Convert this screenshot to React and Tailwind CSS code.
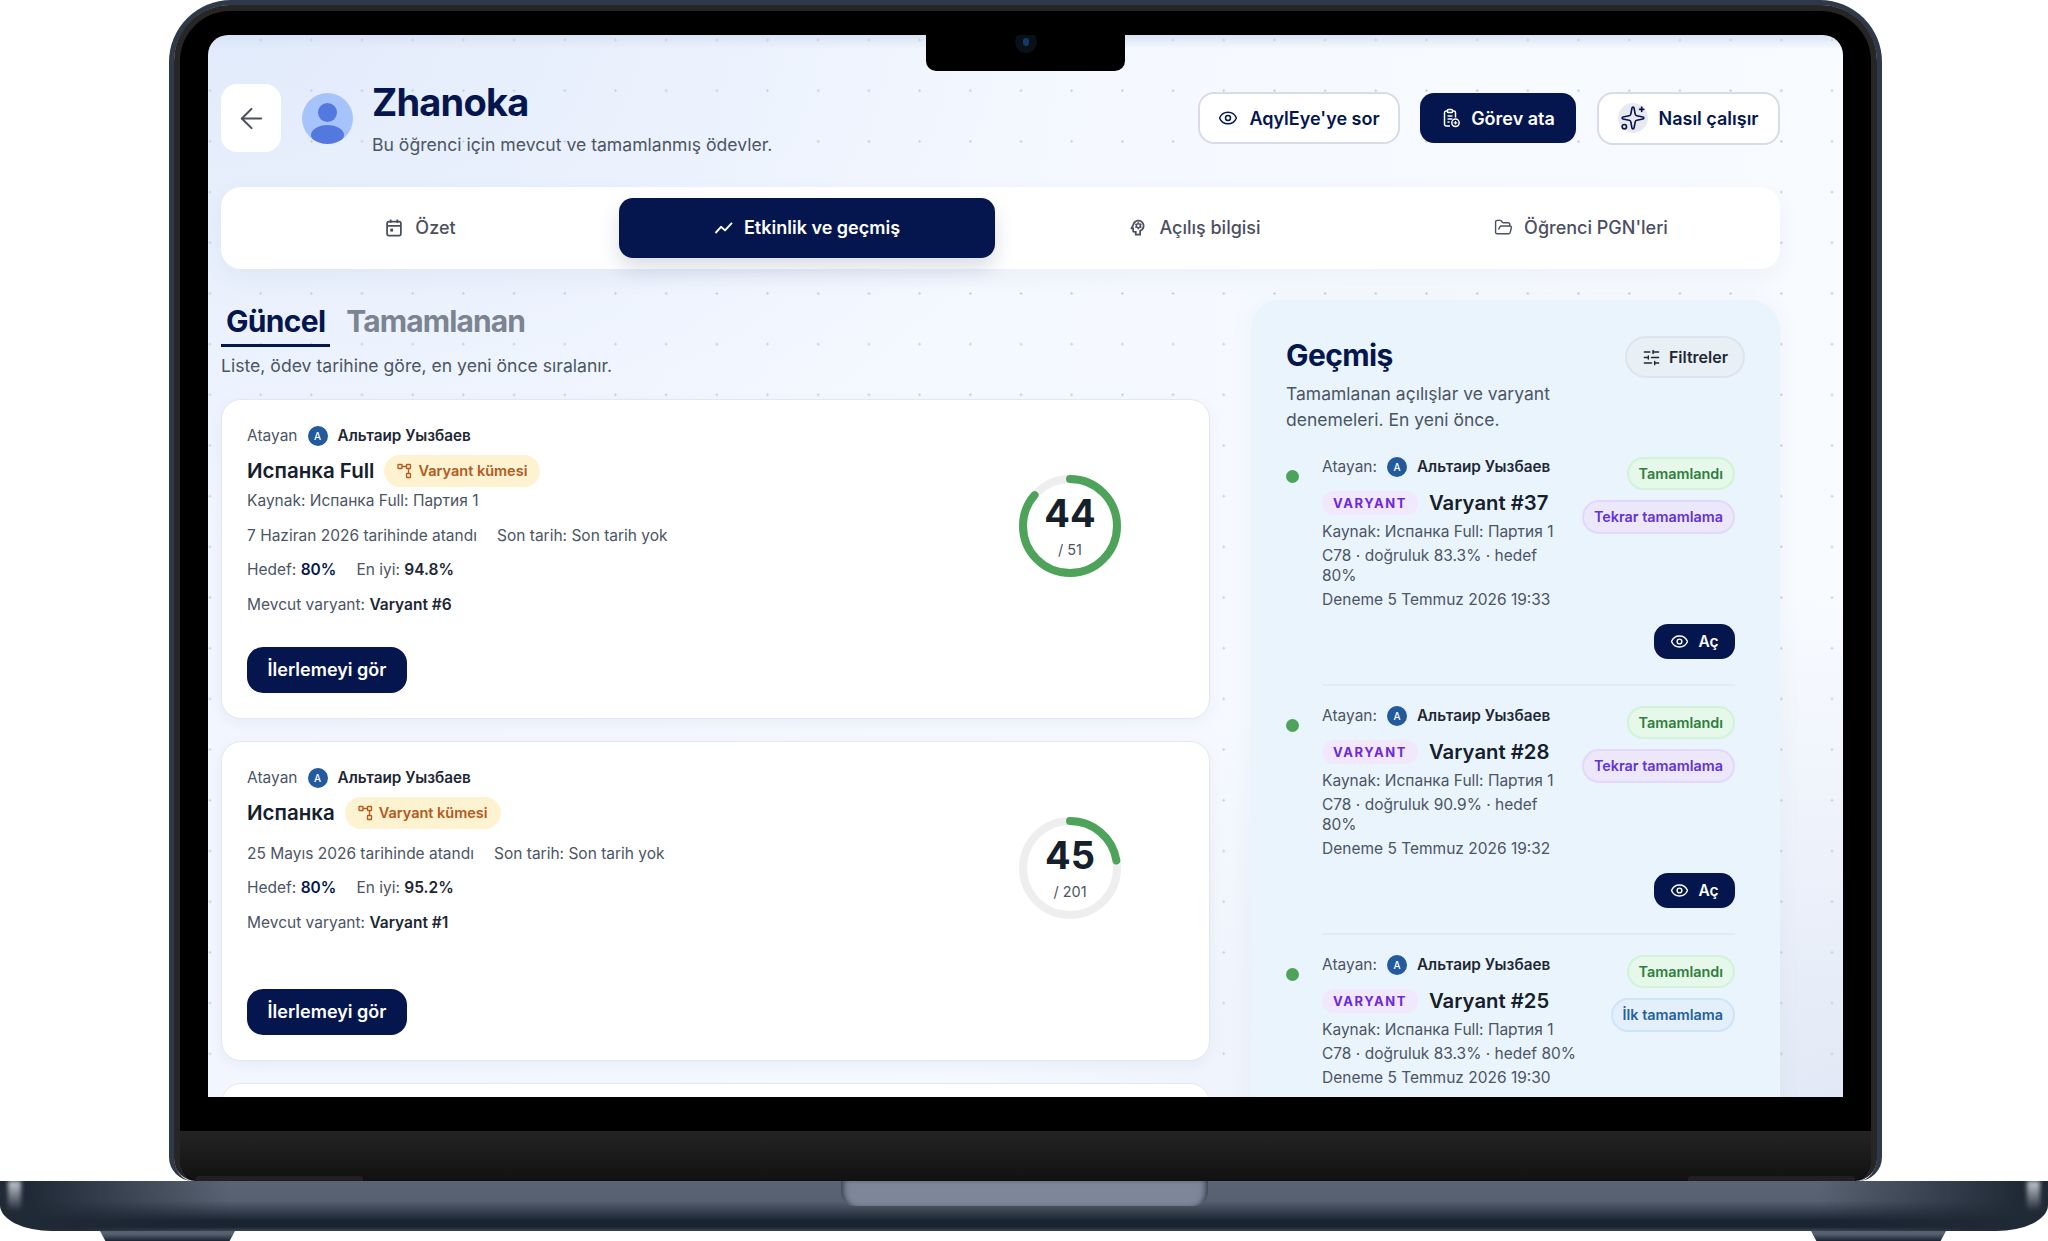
import React from "react";
import { ArrowLeft, Eye, FolderOpen, SlidersHorizontal, Sparkles } from "lucide-react";
import { MdOutlinePsychology } from "react-icons/md";

const tabs = [
  { label: "Özet", icon: <CalendarDot /> },
  { label: "Etkinlik ve geçmiş", icon: <ChartLine />, active: true },
  { label: "Açılış bilgisi", icon: <MdOutlinePsychology size={21} /> },
  { label: "Öğrenci PGN'leri", icon: <FolderOpen size={19} strokeWidth={1.8} /> },
];

const assignments = [
  {
    title: "Испанка Full",
    source: "Kaynak: Испанка Full: Партия 1",
    assigned: "7 Haziran 2026 tarihinde atandı",
    best: "94.8%",
    variant: "Varyant #6",
    done: 44,
    total: 51,
  },
  {
    title: "Испанка",
    assigned: "25 Mayıs 2026 tarihinde atandı",
    best: "95.2%",
    variant: "Varyant #1",
    done: 45,
    total: 201,
  },
];

const history = [
  { name: "Varyant #37", acc: "83.3%", time: "19:33", first: false },
  { name: "Varyant #28", acc: "90.9%", time: "19:32", first: false },
  { name: "Varyant #25", acc: "83.3%", time: "19:30", first: true },
];

function CalendarDot() {
  return (
    <svg width="20" height="20" viewBox="0 0 18 18" fill="none" stroke="currentColor" strokeWidth="1.6">
      <rect x="2.8" y="3.2" width="12.4" height="12.6" rx="1.6" />
      <path d="M2.8 7h12.4M6 1.4v3M12 1.4v3" />
      <rect x="5.6" y="9.6" width="2.6" height="2.6" fill="currentColor" stroke="none" />
    </svg>
  );
}

function ChartLine() {
  return (
    <svg width="20" height="20" viewBox="0 0 20 20" fill="none" stroke="currentColor" strokeWidth="1.9" strokeLinejoin="round">
      <path d="M1.5 15l5.5-6.2 4 3.6 7-7.6" />
    </svg>
  );
}

function ClipboardAdd() {
  return (
    <svg width="20" height="20" viewBox="0 0 20 20" fill="none" stroke="currentColor" strokeWidth="1.5">
      <path d="M9 18H5.2A1.7 1.7 0 0 1 3.5 16.3V4.7A1.7 1.7 0 0 1 5.2 3h7.6a1.7 1.7 0 0 1 1.7 1.7V9.5" />
      <rect x="6.5" y="1.5" width="5" height="3" rx="0.8" fill="#04164d" />
      <path d="M6.5 8h5M6.5 11h5M6.5 14h2" />
      <circle cx="14.5" cy="14.8" r="3.7" />
      <path d="M14.5 13v3.6M12.7 14.8h3.6" strokeWidth="1.2" />
    </svg>
  );
}

function VariantSet() {
  return (
    <svg width="15" height="16" viewBox="0 0 15 16" fill="none" stroke="currentColor" strokeWidth="1.3">
      <rect x="1" y="1.5" width="4" height="4" rx="0.6" />
      <rect x="9.5" y="1.5" width="4" height="4" rx="0.6" />
      <rect x="9.5" y="10.5" width="4" height="4" rx="0.6" />
      <path d="M5 3.5h4.5M11.5 5.5v5" />
    </svg>
  );
}

function UserAvatar() {
  return (
    <div className="relative h-[51px] w-[51px] shrink-0 overflow-hidden rounded-full bg-[#a6c3fb]">
      <div className="absolute left-[16px] top-[10px] h-[19px] w-[19px] rounded-full bg-[#5479de]" />
      <div className="absolute left-[9px] top-[32px] h-[20px] w-[33px] rounded-[50%] bg-[#5479de]" />
    </div>
  );
}

function Initial() {
  return (
    <span className="flex h-[20px] w-[20px] shrink-0 items-center justify-center rounded-full bg-[#23599d] text-[10px] font-medium text-white">
      A
    </span>
  );
}

function ProgressRing({ done, total }) {
  const r = 47;
  const c = 2 * Math.PI * r;
  return (
    <div className="relative mr-[88px] mt-[75px] h-[102px] w-[102px] shrink-0 self-start">
      <svg width="102" height="102" viewBox="0 0 102 102" className="-rotate-90">
        <circle cx="51" cy="51" r={r} fill="none" stroke="#eeeeee" strokeWidth="8" />
        <circle
          cx="51"
          cy="51"
          r={r}
          fill="none"
          stroke="#4ea35a"
          strokeWidth="8"
          strokeLinecap="round"
          strokeDasharray={`${(c * done) / total} ${c}`}
        />
      </svg>
      <div className="absolute inset-0 flex flex-col items-center pt-[16px]">
        <span className="text-[38px] font-bold leading-[44px] text-[#15202b]">{done}</span>
        <span className="mt-[5px] text-[14.5px] leading-[20px] text-[#4b5563]">/ {total}</span>
      </div>
    </div>
  );
}

function AssignmentCard({ item }) {
  return (
    <div className="flex h-[320px] justify-between rounded-[20px] border border-[#e4e7ee] bg-white shadow-[0_4px_14px_rgba(30,50,90,0.05)]">
      <div className="flex flex-col p-[25px] pr-0 text-[15.5px] leading-[22px] text-[#4b5563]">
        <div className="flex items-center gap-[10px]">
          <span>Atayan</span>
          <Initial />
          <span className="text-[15.3px] font-semibold text-[#1d2733]">Альтаир Уызбаев</span>
        </div>
        <div className="mt-[8px] flex h-[32px] items-center gap-[10px]">
          <span className="text-[20.5px] font-semibold text-[#15202b]">{item.title}</span>
          <span className="flex h-[32px] items-center gap-[6px] rounded-full bg-[#fdf3d1] px-[13px] text-[14.5px] font-semibold text-[#b4591f]">
            <VariantSet />
            Varyant kümesi
          </span>
        </div>
        {item.source && <div className="mt-[3px]">{item.source}</div>}
        <div className={`flex gap-[20px] ${item.source ? "mt-[13px]" : "mt-[14px]"}`}>
          <span>{item.assigned}</span>
          <span>Son tarih: Son tarih yok</span>
        </div>
        <div className="mt-[12px] flex gap-[20px]">
          <span>
            Hedef: <b className="font-semibold text-[#04164d]">80%</b>
          </span>
          <span>
            En iyi: <b className="font-semibold text-[#1d2733]">{item.best}</b>
          </span>
        </div>
        <div className="mt-[13px]">
          Mevcut varyant: <b className="font-semibold text-[#1d2733]">{item.variant}</b>
        </div>
        <button className="mt-auto h-[46px] w-[160px] rounded-[16px] bg-[#04164d] text-[18px] font-semibold text-white">
          İlerlemeyi gör
        </button>
      </div>
      <ProgressRing done={item.done} total={item.total} />
    </div>
  );
}

function HistoryItem({ item, last }) {
  return (
    <div className="flex">
      <div className="w-[36px] shrink-0 pt-[13px]">
        <div className="h-[13px] w-[13px] rounded-full bg-[#4ea35a]" />
      </div>
      <div className={`flex-1 ${last ? "" : "border-b-2 border-[#e2ebf5] pb-[25px]"}`}>
        <div className="flex justify-between gap-[12px]">
          <div className="min-w-0 flex-1 text-[15.5px] leading-[20px] text-[#4b5563]">
            <div className="flex items-center gap-[10px]">
              <span>Atayan:</span>
              <Initial />
              <span className="text-[15.3px] font-semibold text-[#1d2733]">Альтаир Уызбаев</span>
            </div>
            <div className="mt-[13px] flex items-center gap-[11px]">
              <span className="flex h-[24px] w-[96px] items-center justify-center rounded-full bg-[#f1e8fd] text-[13px] font-bold tracking-[1.5px] text-[#6d28d9]">
                VARYANT
              </span>
              <span className="text-[20.3px] font-semibold leading-[26px] text-[#15202b]">{item.name}</span>
            </div>
            <div className="mt-[6px]">Kaynak: Испанка Full: Партия 1</div>
            <div className="mt-[4px]">C78 · doğruluk {item.acc} · hedef 80%</div>
            <div className="mt-[4px]">Deneme 5 Temmuz 2026 {item.time}</div>
          </div>
          <div className="flex shrink-0 flex-col items-end gap-[10px]">
            <span className="flex h-[33px] items-center rounded-full border-2 border-[#d2f3d8] bg-[#e5f8e9] px-[10px] text-[14.4px] font-semibold text-[#2f7d3e]">
              Tamamlandı
            </span>
            {item.first ? (
              <span className="flex h-[34px] items-center rounded-full border-2 border-[#cde5fb] bg-[#e3f0fc] px-[10px] text-[14.4px] font-semibold text-[#24609f]">
                İlk tamamlama
              </span>
            ) : (
              <span className="flex h-[34px] items-center rounded-full border-2 border-[#e3d8fb] bg-[#ede7fc] px-[10px] text-[14.4px] font-semibold text-[#6232d6]">
                Tekrar tamamlama
              </span>
            )}
          </div>
        </div>
        {!last && (
          <div className="mt-[14px] flex justify-end">
            <button className="flex h-[35px] w-[81px] items-center justify-center gap-[9px] rounded-[14px] bg-[#04164d] text-[15.5px] font-semibold text-white">
              <Eye size={19} strokeWidth={1.8} />
              Aç
            </button>
          </div>
        )}
      </div>
    </div>
  );
}

function Screen() {
  return (
    <div className="relative h-[1062px] overflow-hidden rounded-t-[20px] bg-[#f3f8ff] bg-[radial-gradient(circle,#c9d2e2_1px,transparent_1.4px),linear-gradient(180deg,#d9e3f3_0px,transparent_14px),radial-gradient(ellipse_900px_500px_at_0%_0%,#e2ebfb,transparent),radial-gradient(ellipse_900px_500px_at_100%_100%,#e2e9f6,transparent),linear-gradient(90deg,#f1f6ff,#f8fbff)] bg-[size:50.7px_50.7px,100%_100%,100%_100%,100%_100%,100%_100%] bg-[position:-23.35px_-20.35px,0_0,0_0,0_0,0_0] pl-[13px] pr-[63px] pt-[49px] [font-family:Inter,sans-serif]">
      {/* header */}
      <div className="flex h-[68px] items-center">
        <button className="flex h-[68px] w-[60px] shrink-0 items-center justify-center rounded-[16px] bg-white text-[#4b5060]">
          <ArrowLeft size={33} strokeWidth={1.5} />
        </button>
        <div className="ml-[21px]">
          <UserAvatar />
        </div>
        <div className="ml-[19px] flex-1">
          <h1 className="mt-[1px] text-[38px] font-bold leading-[46px] tracking-[-0.8px] text-[#04164d]">Zhanoka</h1>
          <p className="mt-[7px] text-[17.6px] leading-[26px] text-[#4b5563]">Bu öğrenci için mevcut ve tamamlanmış ödevler.</p>
        </div>
        <div className="flex items-center gap-[20px] text-[18px] font-semibold text-[#04164d]">
          <button className="flex h-[52px] w-[202px] items-center justify-center gap-[11px] rounded-[16px] border-2 border-[#d8dbe8] bg-white">
            <Eye size={20} strokeWidth={1.8} />
            AqylEye'ye sor
          </button>
          <button className="flex h-[50px] w-[156px] items-center justify-center gap-[10px] rounded-[14px] bg-[#04164d] text-white">
            <ClipboardAdd />
            Görev ata
          </button>
          <button className="ml-[1px] flex h-[53px] w-[183px] items-center justify-center gap-[10px] rounded-[16px] border-2 border-[#d8dbe8] bg-white">
            <span className="flex h-[30px] w-[30px] items-center justify-center rounded-full bg-[#e9eaf1]">
              <Sparkles size={26} strokeWidth={1.5} />
            </span>
            Nasıl çalışır
          </button>
        </div>
      </div>

      {/* tabs */}
      <div className="mt-[35px] grid h-[82px] grid-cols-4 gap-[11px] rounded-[20px] bg-white p-[11px] shadow-[0_8px_24px_rgba(40,60,110,0.05)]">
        {tabs.map((tab) => (
          <div
            key={tab.label}
            className={
              tab.active
                ? "flex items-center justify-center gap-[10px] rounded-[14px] bg-[#04164d] pb-[1px] text-[18px] font-semibold text-white shadow-[0_10px_20px_rgba(30,50,90,0.16)]"
                : "flex items-center justify-center gap-[11px] pb-[1px] text-[18px] font-medium text-[#4b5060]"
            }
          >
            {tab.icon}
            {tab.label}
          </div>
        ))}
      </div>

      {/* columns */}
      <div className="mt-[31px] flex items-start gap-[41px]">
        <div className="w-[989px] shrink-0">
          <div className="flex h-[47px] items-end gap-[16px]">
            <span className="border-b-[3px] border-[#04164d] px-[5px] pb-[1px] text-[30px] font-bold leading-[43px] tracking-[-0.7px] text-[#04164d]">
              Güncel
            </span>
            <span className="pb-[4px] text-[30px] font-bold leading-[43px] tracking-[-0.9px] text-[#7b8490]">Tamamlanan</span>
          </div>
          <p className="mt-[6px] text-[17.6px] leading-[26px] text-[#4b5563]">Liste, ödev tarihine göre, en yeni önce sıralanır.</p>
          <div className="mt-[20px] flex flex-col gap-[22px]">
            {assignments.map((item) => (
              <AssignmentCard key={item.title} item={item} />
            ))}
            <div className="h-[100px] rounded-[20px] border border-[#e4e7ee] bg-white" />
          </div>
        </div>

        <div className="h-[900px] w-[529px] shrink-0 rounded-[30px] bg-[#e9f4fd] px-[35px] pt-[36px] shadow-[0_0_24px_rgba(60,90,150,0.05)]">
          <div className="flex items-center justify-between">
            <h2 className="mt-[-5px] text-[30px] font-bold leading-[42px] tracking-[-0.6px] text-[#04164d]">Geçmiş</h2>
            <button className="flex h-[42px] w-[120px] items-center justify-center gap-[8px] rounded-full border-2 border-[#dbe4ef] bg-[#e8f0f6] text-[16px] font-semibold text-[#1d2733]">
              <SlidersHorizontal size={19} strokeWidth={1.8} />
              Filtreler
            </button>
          </div>
          <p className="mt-[3px] w-[300px] text-[17.5px] leading-[26px] text-[#4b5563]">Tamamlanan açılışlar ve varyant denemeleri. En yeni önce.</p>
          <div className="mt-[24px] flex w-[449px] flex-col gap-[20px]">
            {history.map((item, i) => (
              <HistoryItem key={item.name} item={item} last={i === history.length - 1} />
            ))}
          </div>
        </div>
      </div>

      {/* camera notch */}
      <div className="absolute left-[718px] top-[-1px] flex h-[37px] w-[199px] items-start justify-center rounded-b-[10px] bg-black">
        <span className="mt-[-3px] flex h-[22px] w-[22px] items-center justify-center rounded-full bg-[#0a1018]">
          <span className="h-[8px] w-[6px] rounded-full bg-[#123a66]" />
        </span>
      </div>
    </div>
  );
}

export default function App() {
  return (
    <div className="flex h-[1241px] w-[2048px] flex-col overflow-hidden bg-white">
      {/* lid */}
      <div className="ml-[169px] h-[1181px] w-[1713px] shrink-0 rounded-t-[62px] rounded-b-[24px] border-[5px] border-b-0 border-[#2e3949]">
        <div className="flex h-full flex-col rounded-t-[56px] rounded-b-[22px] border-[6px] border-b-0 border-[#262626] bg-black">
          <div className="px-[28px] pt-[24px]">
            <Screen />
          </div>
          <div className="mt-[34px] flex flex-1 items-end rounded-b-[20px] bg-[linear-gradient(180deg,#242424,#111111)]">
            <div className="ml-[16px] h-[5px] w-[167px] rounded-t-[3px] bg-[#231f20]" />
            <div className="ml-auto mr-[16px] h-[5px] w-[167px] rounded-t-[3px] bg-[#231f20]" />
          </div>
        </div>
      </div>

      {/* base */}
      <div className="relative flex h-[50px] w-full shrink-0 justify-center overflow-hidden rounded-bl-[52px_26px] rounded-br-[52px_26px] bg-[linear-gradient(90deg,#202936_30px,#20293600_230px),linear-gradient(270deg,#202936_30px,#20293600_230px),linear-gradient(180deg,#5a6473_0px,#566070_20px,#1a2330_40px,#1a2330_46px,#3a4555_50px)] bg-no-repeat">
        <div className="absolute left-[8px] top-0 h-[30px] w-[13px] bg-[linear-gradient(180deg,#c6ccd4,#c6ccd400)] blur-[2px]" />
        <div className="absolute right-[8px] top-0 h-[30px] w-[13px] bg-[linear-gradient(180deg,#c6ccd4,#c6ccd400)] blur-[2px]" />
        <div className="h-[25px] w-[367px] rounded-b-[14px] bg-[#7d8799] shadow-[inset_6px_0_6px_-4px_#2a3342,inset_-6px_0_6px_-4px_#2a3342]" />
      </div>
      <div className="flex h-[10px] w-full shrink-0 justify-between pl-[100px] pr-[102px]">
        <div className="h-[10px] w-[135px] bg-[linear-gradient(180deg,#566070_0px,#566070_3px,#1a2330_10px)] [clip-path:polygon(0_0,100%_0,96%_100%,4%_100%)]" />
        <div className="h-[10px] w-[135px] bg-[linear-gradient(180deg,#566070_0px,#566070_3px,#1a2330_10px)] [clip-path:polygon(0_0,100%_0,96%_100%,4%_100%)]" />
      </div>
    </div>
  );
}
